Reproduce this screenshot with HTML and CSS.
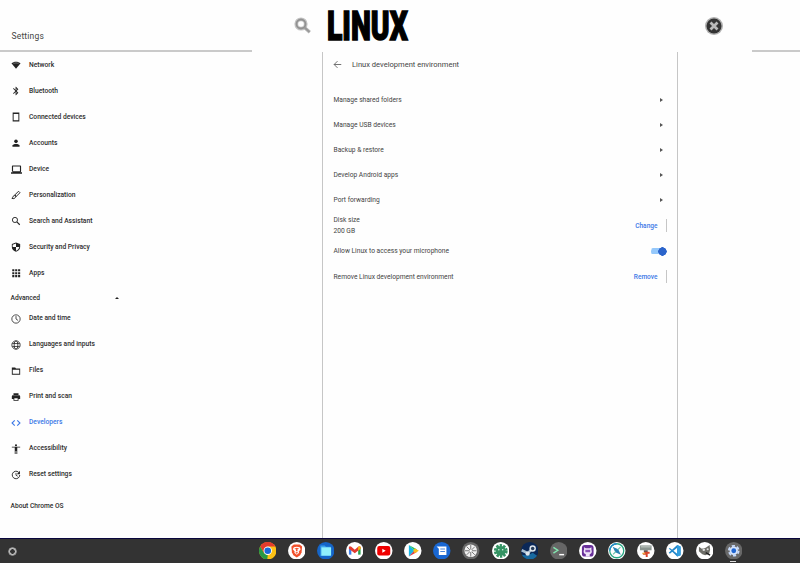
FILE: index.html
```html
<!DOCTYPE html>
<html lang="en">
<head>
<meta charset="utf-8">
<title>Settings</title>
<link rel="stylesheet" href="styles.css">
</head>
<body>
<div class="app">
<header class="top">
  <div class="top-left"><h1>Settings</h1></div>
  <div class="search">
    <svg class="mag" viewBox="0 0 18 18"><circle cx="7" cy="7" r="4.7" fill="none" stroke="#c4c4c4" stroke-width="3.8"/><path d="M10.2 10.2l5.6 5.1" stroke="#bbb" stroke-width="3.4"/><circle cx="7" cy="7" r="4.5" fill="none" stroke="#929292" stroke-width="1.8"/><path d="M10.5 10.5l5 4.5" stroke="#999" stroke-width="1.7"/></svg>
    <div class="query"><span>LINUX</span></div>
    <svg class="clear" viewBox="0 0 18 18"><circle cx="9" cy="9" r="9" fill="#b0b0b0"/><circle cx="9" cy="9" r="7.500" fill="#333"/><path d="M5.500 5.500l7 7M12.500 5.500l-7 7" stroke="#b8b8b8" stroke-width="2.800"/></svg>
  </div>
  <div class="top-right"></div>
</header>
<main class="body">
  <nav class="side">
    <a class="item"><svg viewBox="0 0 24 24"><path d="M12 21L1 8c6-5 16-5 22 0z"/><path d="M6 8.5c4-2 8-2 12 0" stroke="#aaa" stroke-width="1.5" fill="none"/></svg><span>Network</span></a>
    <a class="item"><svg viewBox="0 0 24 24"><path d="M17.7 7.7L12 2h-1v7.600L6.400 5 5 6.400 10.600 12 5 17.600 6.400 19 11 14.400V22h1l5.700-5.700L13.400 12zM13 5.800l1.900 1.900L13 9.600zm1.900 10.500L13 18.200v-3.800z"/></svg><span>Bluetooth</span></a>
    <a class="item"><svg viewBox="0 0 24 24"><path d="M4 1h16v22H4zM6.300 4.500v15h11.400v-15z" fill-rule="evenodd"/></svg><span>Connected devices</span></a>
    <a class="item"><svg viewBox="0 0 24 24"><circle cx="12" cy="8" r="4.300"/><path d="M3.500 21v-3c0-5 17-5 17 0v3z"/></svg><span>Accounts</span></a>
    <a class="item"><svg class="wide" viewBox="0 0 24 24"><path d="M20 18c1.100 0 2-.9 2-2V5c0-1.500-.9-2-2-2H4c-1.100 0-2 .9-2 2v11c0 1.100.9 2 2 2H0v3h24v-3zM4.500 5.500h15v10.500h-15z" fill-rule="evenodd"/></svg><span>Device</span></a>
    <a class="item"><svg viewBox="0 0 24 24"><path d="M9 12l9-9 3.500 3.500-9 9zM9 12l3.500 3.500M8 13c-4 1-2 5-6 7 4 2 9 0 9-4z" fill="none" stroke="#222" stroke-width="2.300"/></svg><span>Personalization</span></a>
    <a class="item"><svg viewBox="0 0 24 24"><circle cx="9.500" cy="9.500" r="6.200" fill="none" stroke="#222" stroke-width="2.200"/><path d="M14 14l7 7" stroke="#222" stroke-width="2.600"/></svg><span>Search and Assistant</span></a>
    <a class="item"><svg viewBox="0 0 24 24"><path d="M12 1L2 5v7c0 5.500 4.300 10 10 11.500 5.700-1.500 10-6 10-11.500V5zM12 12h8c-.7 4-4 7.800-8 9.200V12H4V6.400L12 3.300z" fill-rule="evenodd"/></svg><span>Security and Privacy</span></a>
    <a class="item"><svg viewBox="0 0 24 24"><path d="M3 3h5v5H3zm7 0h5v5h-5zm7 0h5v5h-5zM3 10h5v5H3zm7 0h5v5h-5zm7 0h5v5h-5zM3 17h5v5H3zm7 0h5v5h-5zm7 0h5v5h-5z"/></svg><span>Apps</span></a>
    <div class="advanced"><span>Advanced</span><i class="up"></i></div>
    <a class="item"><svg viewBox="0 0 24 24"><circle cx="12" cy="12" r="10" fill="none" stroke="#222" stroke-width="1.900"/><path d="M12 5v7l5 3.500" fill="none" stroke="#222" stroke-width="1.900"/></svg><span>Date and time</span></a>
    <a class="item"><svg viewBox="0 0 24 24"><g fill="none" stroke="#222" stroke-width="1.900"><circle cx="12" cy="12" r="10"/><ellipse cx="12" cy="12" rx="4.500" ry="10"/><path d="M3 8.500h18M3 15.500h18"/></g></svg><span>Languages and inputs</span></a>
    <a class="item"><svg viewBox="0 0 24 24"><path d="M2 3.500h8l2 2.500h10v15H2zM4.200 9v9.800h15.600V9z" fill-rule="evenodd"/></svg><span>Files</span></a>
    <a class="item"><svg viewBox="0 0 24 24"><path d="M19 8H5c-1.700 0-3 1.300-3 3v6h4v4h12v-4h4v-6c0-1.700-1.300-3-3-3zm-3 11H8v-4h8zM18 3H6v4h12z" fill-rule="evenodd"/></svg><span>Print and scan</span></a>
    <a class="item active"><svg viewBox="0 0 24 24"><path d="M9 5.500L2.500 12 9 18.500M15 5.500l6.500 6.500-6.500 6.500" fill="none" stroke="#3b78e7" stroke-width="2.600"/></svg><span>Developers</span></a>
    <a class="item"><svg viewBox="0 0 24 24"><circle cx="12" cy="2.800" r="2.500"/><path d="M22 8.500h-7V24h-2v-7h-2v7H9V8.500H2v-2h20z"/></svg><span>Accessibility</span></a>
    <a class="item"><svg viewBox="0 0 24 24"><path d="M21 12a9 9 0 1 1-3-6.800" fill="none" stroke="#222" stroke-width="2.200"/><path d="M21.500 2v8H14z"/><path d="M12 7v5.500l4 2.500" fill="none" stroke="#222" stroke-width="2"/></svg><span>Reset settings</span></a>
    <div class="about">About Chrome OS</div>
  </nav>
  <section class="panel">
    <div class="title"><svg viewBox="0 0 24 24"><path d="M22 12H3M12 3l-9 9 9 9" fill="none" stroke="#555" stroke-width="2.200"/></svg><h2>Linux development environment</h2></div>
    <div class="row w1"><span>Manage shared folders</span><i class="next"></i></div>
    <div class="row"><span>Manage USB devices</span><i class="next"></i></div>
    <div class="row"><span>Backup &amp; restore</span><i class="next"></i></div>
    <div class="row"><span>Develop Android apps</span><i class="next"></i></div>
    <div class="row"><span>Port forwarding</span><i class="next"></i></div>
    <div class="row disk"><div class="two"><span>Disk size</span><span>200 GB</span></div><b class="action">Change</b></div>
    <div class="row"><span>Allow Linux to access your microphone</span><i class="toggle"></i></div>
    <div class="row remove"><span>Remove Linux development environment</span><b class="action">Remove</b></div>
  </section>
</main>
<footer class="shelf">
  <i class="launcher"></i>
  <div class="apps">
    <svg viewBox="0 0 18 18"><circle cx="9" cy="9" r="9" fill="#fbc116"/><path d="M1.200 4.500A9 9 0 0 1 16.800 4.500H9L5.100 11.200z" fill="#e33b2e"/><path d="M1.200 4.500L5.100 11.200 9 13.500 8.500 18A9 9 0 0 1 1.200 4.500z" fill="#269846"/><circle cx="9" cy="9" r="4.300" fill="#fff"/><circle cx="9" cy="9" r="3.400" fill="#1a68d8"/></svg>
    <svg viewBox="0 0 18 18"><circle cx="9" cy="9" r="9" fill="#fff"/><path d="M6 2.500h6l2.500 2-.5 6-1.500 3L9 16l-3.500-2.500-1.500-3-.5-6z" fill="#f1502b"/><path d="M6 5.500L9 5l3 .5 1 2-2 2.500.5 1L9 13l-2.500-2 .5-1-2-2.500z" fill="#fff"/><path d="M6.500 7l2 .7L8 9.500h2l-.5-1.800 2-.7L9 6zM7.500 11L9 10.300l1.500.7L9 12z" fill="#f1502b"/></svg>
    <svg viewBox="0 0 18 18"><circle cx="9" cy="9" r="9" fill="#1565c8"/><path d="M3.500 3.500h4.500l1.200 1.500H14v9.500H3.500z" fill="#3aa0ec"/><path d="M4.500 5.500h10V14h-10z" fill="#8ff0fc"/></svg>
    <svg viewBox="0 0 18 18"><circle cx="9" cy="9" r="9" fill="#fff"/><path d="M3 5.500h2.500V13H3z" fill="#3e7fe8"/><path d="M12.500 5.500H15V13h-2.500z" fill="#28a34d"/><path d="M3 7V5q1-1.500 2.500 0L9 8l3.500-3Q14 3.500 15 5v2L9 11.500z" fill="#e33c30"/><path d="M12.500 5Q14 3.500 15 5v2l-2.500 2z" fill="#f8bb14"/></svg>
    <svg viewBox="0 0 18 18"><circle cx="9" cy="9" r="9" fill="#fff"/><rect x="2.300" y="4.200" width="13.400" height="9.600" rx="2" fill="#f00000"/><path d="M7.500 7v4L11 9z" fill="#fff"/></svg>
    <svg viewBox="0 0 18 18"><circle cx="9" cy="9" r="9" fill="#fff"/><path d="M5 3v12l6-6z" fill="#16b7e8"/><path d="M5 3l8.500 4.700L11 9z" fill="#20bf64"/><path d="M5 15l8-4.500L10.500 9z" fill="#e63d45"/><path d="M11 6.500L15.300 9 11 11.500 9.500 9z" fill="#f9bd18"/></svg>
    <svg viewBox="0 0 18 18"><circle cx="9" cy="9" r="9" fill="#1967d2"/><path d="M3.700 4.500h10.100v8.800H6V7z" fill="#fff"/><path d="M7.500 7.200h4.800M7.500 9.800h4.800" stroke="#4c87dc" stroke-width="1.100"/></svg>
    <svg viewBox="0 0 18 18"><circle cx="9" cy="9" r="9" fill="#686868"/><circle cx="9" cy="9" r="6.500" fill="#f1f1f1"/><path d="M9 3v12M3 9h12M4.800 4.800l8.400 8.400M13.200 4.800l-8.400 8.400" stroke="#777" stroke-width="1"/><circle cx="9" cy="9" r="1.300" fill="#fff"/></svg>
    <svg viewBox="0 0 18 18"><circle cx="9" cy="9" r="9" fill="#fff"/><circle cx="9" cy="9.200" r="5.200" fill="#349363"/><circle cx="9" cy="9.200" r="5.700" fill="none" stroke="#349363" stroke-width="2.800" stroke-dasharray="2.400 1.181"/><circle cx="7" cy="8" r=".8" fill="#d8efe2"/><circle cx="11" cy="8" r=".8" fill="#d8efe2"/></svg>
    <svg viewBox="0 0 18 18"><circle cx="9" cy="9" r="9" fill="#0b2857"/><path d="M1 13a9 9 0 0 0 15.500 1.200L12 11l-5 3z" fill="#186aa0"/><path d="M.7 8.500L7 11.500l4-4" stroke="#a7bed1" stroke-width="2.600" fill="none"/><circle cx="12" cy="6.700" r="3.300" fill="#e0e7ed"/><circle cx="12" cy="6.700" r="1.800" fill="#263d5b"/><circle cx="6.800" cy="12" r="2.200" fill="#e0e7ed"/></svg>
    <svg viewBox="0 0 18 18"><circle cx="9" cy="9" r="9" fill="#666"/><path d="M3.500 5.500L8 8.500 3.500 11.500" fill="none" stroke="#83e7b0" stroke-width="1.500"/><path d="M9.500 13h5" stroke="#fff" stroke-width="1.500"/></svg>
    <svg viewBox="0 0 18 18"><circle cx="9" cy="9" r="9" fill="#fff"/><rect x="3" y="3" width="12" height="12" rx="3" fill="#683099"/><path d="M7 15v-2.500C4.500 12 4.500 9.500 5.200 8V5.500L7 6.500h4l1.800-1V8c.8 2 .5 4-1.800 4.500V15z" fill="#eee3f7"/><path d="M6.500 8h5v2.500h-5z" fill="#8951b4"/></svg>
    <svg viewBox="0 0 18 18"><circle cx="9" cy="9" r="9" fill="#fff"/><circle cx="9" cy="9" r="7.200" fill="none" stroke="#2aa884" stroke-width="1.300"/><path d="M1.800 9A7.200 7.200 0 0 1 9 1.800" stroke="#2388cc" stroke-width="1.300" fill="none"/><path d="M4.800 4.800L10.500 7.500l2.700 5.700L7.500 10.500z" fill="#2883b4"/><path d="M12.800 5.200L10 8M8 10l-2.800 2.800" stroke="#72c5ad" stroke-width="1.200" fill="none"/></svg>
    <svg viewBox="0 0 18 18"><circle cx="9" cy="9" r="9" fill="#fff"/><path d="M3 3.500h12v5H3z" fill="#8b9590"/><path d="M4 5h10" stroke="#c6cdc9"/><path d="M7 8.500h4v2H7z" fill="#555"/><path d="M8 10h5v2h-2v3.500H9V13H6z" fill="#d9442c"/><path d="M5.500 11h3v1.500h-3z" fill="#e6a13b"/></svg>
    <svg viewBox="0 0 18 18"><circle cx="9" cy="9" r="9" fill="#fff"/><path d="M11.500 3L15 4.500v9L11.500 15 4 7.800 2.800 7l1.200-.9L11.500 12V6L4 12l-1.200-1z" fill="#2388cb"/><path d="M11.500 3L15 4.500v9L11.500 15z" fill="#329fe0"/></svg>
    <svg viewBox="0 0 18 18"><circle cx="9" cy="9" r="9" fill="#fff"/><path d="M3 5l3 2 4-1 4-3 .5 5-1 4-4 1.500-3-1L3 9.500z" fill="#6d6d67"/><circle cx="8" cy="8" r="1.300" fill="#ddd"/><circle cx="12" cy="7.500" r="1.100" fill="#ddd"/><path d="M10 11l4.500 2.500" stroke="#222" stroke-width="1.500"/></svg>
    <svg viewBox="0 0 18 18"><circle cx="9" cy="9" r="9" fill="#686868"/><circle cx="9" cy="9" r="4.300" fill="#d6e4fb"/><circle cx="9" cy="9" r="5" fill="none" stroke="#c8dafa" stroke-width="2" stroke-dasharray="3.200 2.036"/><circle cx="9" cy="9" r="2.500" fill="#1f65d1"/></svg>
    <i class="running"></i>
  </div>
</footer>
</div>
</body>
</html>
```
FILE: styles.css
```css
* { box-sizing: border-box; }
body { margin: 0; background: #fefefe; font-family: Roboto, "Liberation Sans", sans-serif; color: #2d2d2d; }
.app { width: 800px; height: 563px; display: flex; flex-direction: column; overflow: hidden; }
svg { display: block; flex: none; }
h1, h2 { margin: 0; font-weight: 400; }
.top { height: 52px; display: flex; flex: none; }
.top-left { width: 252px; border-bottom: 2px solid #cacaca; padding: 30.500px 0 0 11.500px; }
.top-left h1 { font-size: 8.500px; line-height: 11px; letter-spacing: .18px; color: #444; }
.top-right { width: 48px; border-bottom: 2px solid #cacaca; }
.search { width: 500px; display: flex; align-items: flex-start; padding-left: 41.500px; }
.mag { width: 18px; height: 18px; margin-top: 17px; }
.query { width: 81px; margin: 0 297.500px 0 15px; height: 52px; }
.query span { display: block; width: max-content; font-size: 41.500px; line-height: 52px; font-weight: 900; color: #000; transform: scaleX(.683); transform-origin: 0 50%; -webkit-text-stroke: 1.500px #000; }
.clear { width: 18px; height: 18px; margin-top: 17px; }
.body { display: flex; height: 486px; flex: none; }
.side { width: 322px; }
.item { height: 26px; display: flex; align-items: center; padding: 0 0 0 10.500px; font-size: 6.700px; line-height: 9px; font-weight: 500; }
.item svg { width: 10px; height: 10px; margin-right: 8.500px; fill: #222; }
.item svg.wide { width: 11px; height: 11px; margin-right: 7.500px; }
.item.active { color: #3b78e7; }
.advanced { height: 19.500px; display: flex; align-items: center; padding: 5px 0 0 10.500px; font-size: 6.700px; font-weight: 500; }
.advanced span { width: 104px; }
.up { border: 2.500px solid transparent; border-top: 0; border-bottom-color: #222; }
.about { padding: 14.500px 0 0 10.500px; font-size: 6.650px; line-height: 9px; font-weight: 500; }
.panel { width: 356px; border: solid #c6c6c6; border-width: 0 1px; padding: 0 10px 0 10.500px; font-size: 6.670px; line-height: 8px; color: #444; }
.title { height: 25px; display: flex; align-items: center; }
.title svg { width: 9px; height: 9px; margin: 0 10.500px 0 -1px; }
.title h2 { font-size: 7.550px; }
.row { height: 25px; display: flex; align-items: center; justify-content: space-between; }
.w1 { margin-top: 10.500px; }
.next { border: 2.500px solid transparent; border-right: 0; border-left: 3px solid #555; margin-right: 4px; }
.two { display: flex; flex-direction: column; line-height: 10.500px; }
.action { height: 13px; line-height: 14px; font-size: 6.550px; font-weight: 500; color: #3b78e7; padding-right: 8.500px; border-right: 1px solid #c6c6c6; }
.disk { height: 26px; }
.toggle { width: 16px; height: 9px; border-radius: 5px; background: radial-gradient(circle at 11.500px 4.500px, #2b64cb 4px, transparent 4.500px), linear-gradient(#95c8fb, #95c8fb) 0 50% / 12px 6px no-repeat; }
.remove { height: 26px; }
.shelf { height: 25px; flex: none; display: flex; align-items: center; background: #333; border-top: 1px solid #09063d; padding-left: 9px; }
.launcher { width: 7px; height: 7px; border: 1px solid #e9e9e9; border-radius: 50%; box-shadow: 0 0 0 .5px #ddd; }
.apps { position: relative; display: flex; gap: 11.650px; margin: -1px 0 0 242.500px; }
.apps svg { width: 17.500px; height: 17.500px; }
.running { position: absolute; right: 6px; bottom: -3px; width: 6px; height: 1px; background: #ddd; }
```
